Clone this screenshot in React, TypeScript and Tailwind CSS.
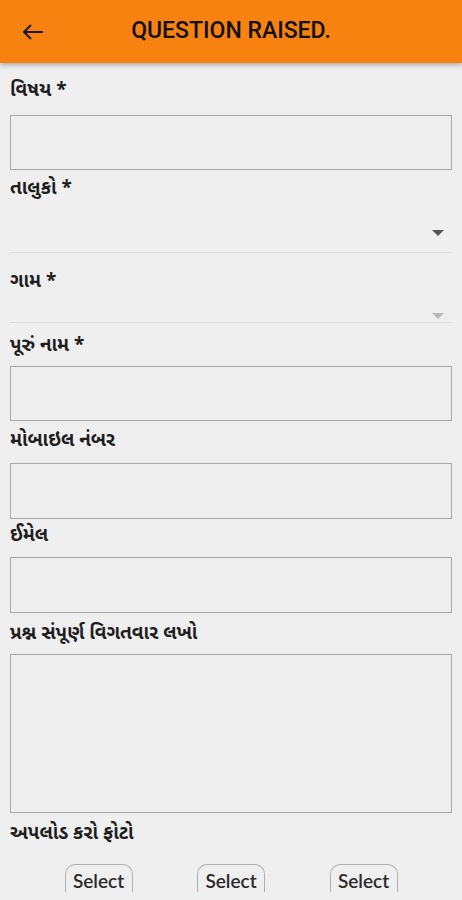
import React from "react";

const GU = { fontFamily: '"Noto Sans Gujarati", "Lohit Gujarati", "Noto Sans", sans-serif' };

function Label({ text, className }: { text: string; className: string }) {
  return (
    <div className={`h-6 leading-6 text-[19px] font-bold text-[#1e1e1e] ${className}`} style={GU}>
      {text}
    </div>
  );
}

function Box({ className }: { className: string }) {
  return <div className={`mx-[10px] border-[1.5px] border-[#a9a9a9] bg-[#efefef] ${className}`} />;
}

function Dropdown({ className, faded }: { className: string; faded?: boolean }) {
  return (
    <div className={`mx-[10px] flex items-end justify-end border-b border-[#dedede] ${className}`}>
      <svg width="12" height="6" viewBox="0 0 12 6" className="mr-[8px]">
        <path d="M0 0h12L6 6z" fill={faded ? "#b8b8b8" : "#555"} />
      </svg>
    </div>
  );
}

export default function App() {
  return (
    <div className="h-[900px] w-full overflow-hidden bg-[#efefef]">
      <header
        className="relative z-10 flex h-[63px] items-center bg-[#f7820f] shadow-[0_2px_5px_rgba(0,0,0,0.3)]"
        style={{ fontFamily: "Roboto, sans-serif" }}
      >
        <svg width="22" height="16" viewBox="0 0 22 16" className="ml-[22px]">
          <path d="M21 8H2M9 1L2 8l7 7" fill="none" stroke="#1a1a1a" strokeWidth="2" />
        </svg>
        <h1 className="pointer-events-none absolute left-0 right-0 text-center text-[23px] font-medium text-[#111]">
          QUESTION RAISED.
        </h1>
      </header>

      <div className="h-[829px] overflow-hidden">
        <Label text="વિષય *" className="mx-[10px] mt-[17px] mb-[11px]" />
        <Box className="h-[55px]" />

        <Label text="તાલુકો *" className="mx-[10px] mt-[8px]" />
        <Dropdown className="h-[51px] pb-[16px]" />

        <Label text="ગામ *" className="mx-[10px] mt-[18px]" />
        <Dropdown className="h-[28px] pb-[3px]" faded />

        <Label text="પૂરું નામ *" className="mx-[10px] mt-[12px] mb-[7px]" />
        <Box className="h-[55px]" />

        <Label text="મોબાઇલ નંબર" className="mx-[10px] mt-[9px] mb-[9px]" />
        <Box className="h-[56px]" />

        <Label text="ઈમેલ" className="mx-[10px] mt-[6px] mb-[8px]" />
        <Box className="h-[56px]" />

        <Label text="પ્રશ્ન સંપૂર્ણ વિગતવાર લખો" className="mx-[10px] mt-[10px] mb-[7px]" />
        <Box className="h-[159px]" />

        <Label text="અપલોડ કરો ફોટો" className="mx-[10px] mt-[10px] mb-[17px]" />
        <div className="flex justify-evenly">
          {[0, 1, 2].map((i) => (
            <button
              key={i}
              className="h-[28px] w-[68px] rounded-t-[10px] border border-b-0 border-[#b0b0b0] pt-[5px] text-[19px] font-semibold leading-[20px] text-[#2a2a2a]"
              style={{ fontFamily: "Lato, sans-serif" }}
            >
              Select
            </button>
          ))}
        </div>
      </div>
    </div>
  );
}
